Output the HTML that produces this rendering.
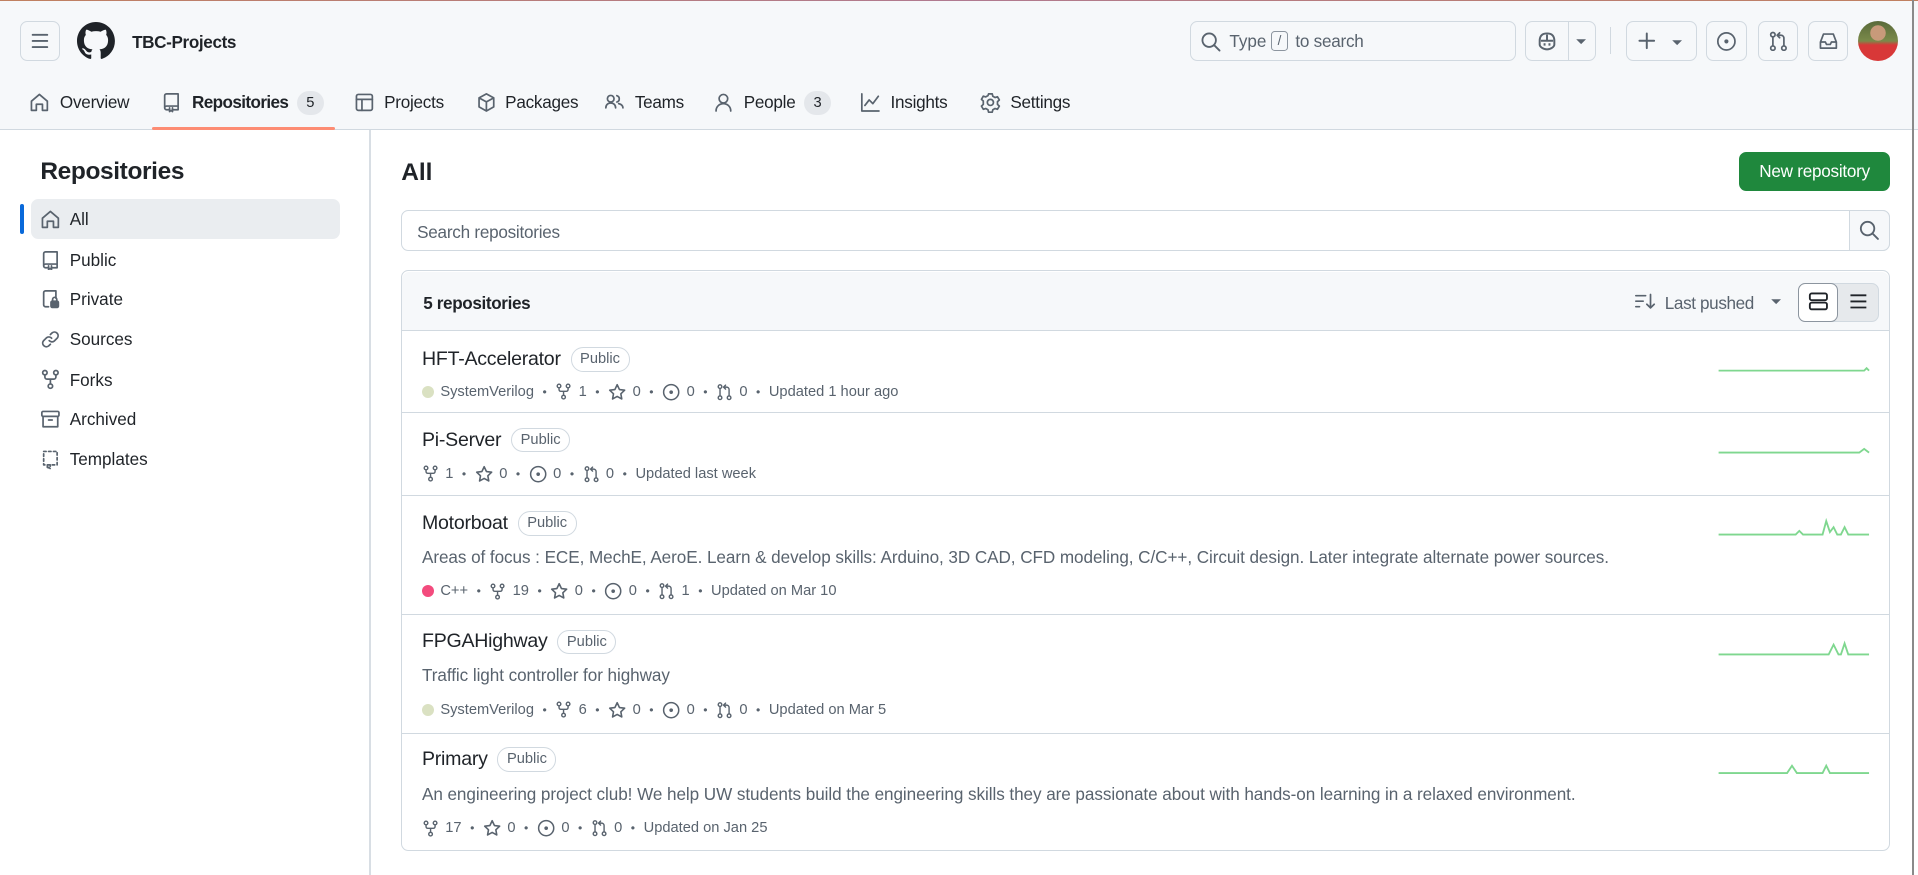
<!DOCTYPE html>
<html><head><meta charset="utf-8">
<style>
*{box-sizing:border-box;margin:0;padding:0}
html,body{width:1918px;height:875px;overflow:hidden;background:#fff}
#w{zoom:1.2232;width:1568px;height:716px;position:relative;font-family:"Liberation Sans",sans-serif;color:#1f2328;font-size:14px}
.a{position:absolute}
svg{display:block}
.ic{fill:none;stroke:#59636e;stroke-width:1.4;stroke-linecap:round;stroke-linejoin:round}
.btn{position:absolute;border:1px solid #d1d9e0;border-radius:6px;background:#f6f8fa}
.tab{position:absolute;top:75px;font-size:14px;color:#1f2328;white-space:nowrap;letter-spacing:-0.2px;display:flex;align-items:center;height:18px}
.cnt{height:20px;min-width:22px;border-radius:10px;background:#e4e7eb;font-size:12px;text-align:center;line-height:20px;color:#1f2328;margin-left:7px;letter-spacing:0}
.side{position:absolute;left:57px;font-size:14px;color:#1f2328}
.sic{position:absolute;left:33px}
.row{position:absolute;left:328px;width:1216px;border-top:1px solid #d1d9e0}
.th{position:absolute;left:17px;display:flex;align-items:center;gap:8px}
.t{font-size:16px;color:#1f2328;letter-spacing:-0.2px}
.pub{font-size:12px;color:#59636e;border:1px solid #d1d9e0;border-radius:10px;height:20px;line-height:18px;padding:0 7px}
.meta{position:absolute;left:17px;font-size:12px;color:#59636e;display:flex;align-items:center;white-space:nowrap}
.meta svg{margin-right:5px}
.dot{margin:0 7px;font-size:10px}
.desc{position:absolute;left:17px;font-size:14px;color:#59636e;letter-spacing:-0.05px}
.lang{width:10px;height:10px;border-radius:50%;display:inline-block;margin-right:5px}
</style></head><body><div id="w">
<div class="a" style="left:0;top:0;width:1568px;height:106px;background:#f6f8fa;border-bottom:1px solid #d1d9e0"></div>
<div class="a" style="left:0;top:0;width:1568px;height:1px;background:linear-gradient(90deg,#c08060,#b07a90,#c08060)"></div>
<div class="a" style="left:1563px;top:0;width:2px;height:716px;background:#8a8a8a"></div>
<div class="btn" style="left:16px;top:17px;width:33px;height:33px"><svg width="31" height="31" class="ic" style="stroke:#59636e;stroke-width:1.5"><path d="M9.5 10.5h12M9.5 15.5h12M9.5 20.5h12"/></svg></div>
<svg class="a" style="left:63px;top:18px" width="31" height="31" viewBox="0 0 16 16"><path fill="#1f2328" d="M8 0C3.58 0 0 3.58 0 8c0 3.540 2.29 6.53 5.47 7.59.4.07.55-.17.55-.38 0-.19-.01-.82-.01-1.49-2.01.37-2.53-.49-2.690-.94-.09-.23-.48-.94-.82-1.13-.28-.15-.68-.52-.01-.53.63-.01 1.08.58 1.23.82.72 1.21 1.870.87 2.330.66.07-.52.28-.87.51-1.07-1.78-.2-3.64-.89-3.64-3.95 0-.87.31-1.59.82-2.15-.08-.2-.36-1.02.08-2.12 0 0 .67-.21 2.2.82.64-.18 1.32-.27 2-.27.68 0 1.36.09 2 .27 1.53-1.04 2.2-.82 2.2-.82.44 1.1.16 1.92.08 2.12.51.56.82 1.27.82 2.15 0 3.07-1.87 3.75-3.65 3.95.29.25.54.73.54 1.48 0 1.07-.01 1.93-.01 2.2 0 .21.15.46.55.38A8.013 8.013 0 0016 8c0-4.42-3.58-8-8-8z"/></svg>
<div class="a" style="left:108px;top:27px;font-size:14px;font-weight:bold;letter-spacing:-0.3px">TBC-Projects</div>
<div class="btn" style="left:973px;top:17px;width:266px;height:33px;background:#f6f8fa"></div>
<svg class="a ic" style="left:981px;top:25px;stroke-width:1.5" width="18" height="18"><circle cx="7.5" cy="7.5" r="5.5"/><path d="M11.5 11.5l4.5 4.5"/></svg>
<div class="a" style="left:1005px;top:26px;font-size:14px;color:#59636e">Type</div>
<div class="a" style="left:1039px;top:25px;width:14px;height:17px;border:1px solid #8c959f;border-radius:3px;font-size:11px;color:#59636e;text-align:center;line-height:15px">/</div>
<div class="a" style="left:1059px;top:26px;font-size:14px;color:#59636e;letter-spacing:-0.2px">to search</div>
<div class="btn" style="left:1247px;top:17px;width:58px;height:33px"></div>
<div class="a" style="left:1282px;top:18px;width:1px;height:31px;background:#d1d9e0"></div>
<svg class="a" style="left:1256px;top:25px" width="18" height="17" viewBox="0 0 18 17"><path fill="none" stroke="#59636e" stroke-width="1.6" d="M3 8c0-4 2-6 6-6s6 2 6 6v3c0 2-3 4-6 4s-6-2-6-4z"/><path stroke="#59636e" stroke-width="1.6" d="M9 3v5M4 8h10"/><path stroke="#59636e" stroke-width="1.6" d="M7 10v2M11 10v2"/></svg>
<svg class="a" style="left:1288px;top:31px" width="10" height="6"><path d="M1 1h8L5 5z" fill="#59636e"/></svg>
<div class="a" style="left:1316px;top:22px;width:1px;height:22px;background:#d1d9e0"></div>
<div class="btn" style="left:1329px;top:17px;width:58px;height:33px"></div>
<svg class="a ic" style="left:1338px;top:25px;stroke-width:1.6" width="16" height="16"><path d="M8 2v12M2 8h12"/></svg>
<svg class="a" style="left:1366px;top:32px" width="10" height="6"><path d="M1 1h8L5 5z" fill="#59636e"/></svg>
<div class="btn" style="left:1395px;top:17px;width:33px;height:33px"></div>
<svg class="a ic" style="left:1403px;top:25px" width="17" height="17"><circle cx="8.5" cy="8.5" r="7"/><circle cx="8.5" cy="8.5" r="1" fill="#59636e"/></svg>
<div class="btn" style="left:1437px;top:17px;width:33px;height:33px"></div>
<svg class="a ic" style="left:1445px;top:25px" width="17" height="17"><circle cx="4" cy="3" r="1.8"/><circle cx="4" cy="14" r="1.8"/><circle cx="13" cy="14" r="1.8"/><path d="M4 5v7M13 12V6c0-1.5-1-2.5-2.5-2.5H8M9.5 1.5l-2 2 2 2"/></svg>
<div class="btn" style="left:1478px;top:17px;width:33px;height:33px"></div>
<svg class="a ic" style="left:1486px;top:25px" width="17" height="17"><path d="M2 9l2.5-6.5h8L15 9v5H2zM2 9h4l1 2h3l1-2h4"/></svg>
<div class="a" style="left:1519px;top:17px;width:33px;height:33px;border-radius:50%;overflow:hidden;background:radial-gradient(circle at 50% 30%,#c89a7a 0 22%,transparent 23%),linear-gradient(180deg,#5a6a3a 0%,#7a8a4a 50%,#d83838 60%,#d83838 100%)"></div>
<!-- tabs -->
<svg class="a ic" style="left:24px;top:75px" width="17" height="17"><path d="M2 7.5L8.5 2 15 7.5V15h-4v-5H6v5H2z"/></svg>
<div class="tab" style="left:49px">Overview</div>
<svg class="a ic" style="left:132px;top:75px" width="17" height="17"><path d="M3 13V3a1.5 1.5 0 011.5-1.5H14v10H4.5A1.5 1.5 0 003 13a1.5 1.5 0 001.5 1.5H6M14 11.5v3h-4M7 13v3l1.2-1 1.2 1v-3"/></svg>
<div class="tab" style="left:157px;font-weight:bold;letter-spacing:-0.5px">Repositories<span class="cnt" style="font-weight:normal">5</span></div>
<div class="a" style="left:124px;top:104px;width:150px;height:2px;background:#fd8c73;border-radius:2px"></div>
<svg class="a ic" style="left:289px;top:75px" width="17" height="17"><rect x="2" y="2" width="13" height="13" rx="1.5"/><path d="M2 6h13M6.5 6v9"/></svg>
<div class="tab" style="left:314px">Projects</div>
<svg class="a ic" style="left:389px;top:75px" width="17" height="17"><path d="M8.5 1.5l6 3.3v7.4l-6 3.3-6-3.3V4.8zM2.5 4.8l6 3.3 6-3.3M8.5 8.1v7.4"/></svg>
<div class="tab" style="left:413px">Packages</div>
<svg class="a ic" style="left:494px;top:75px" width="17" height="17"><circle cx="5.5" cy="5.5" r="2.7"/><path d="M1.5 13c0-2.5 1.8-4 4-4s4 1.5 4 4M10.5 3a2.7 2.7 0 010 5.2M12 9.5c2 .5 3.5 1.8 3.5 3.5"/></svg>
<div class="tab" style="left:519px">Teams</div>
<svg class="a ic" style="left:583px;top:75px" width="17" height="17"><circle cx="8.5" cy="5.5" r="3.5"/><path d="M2.5 15.5c0-3.5 2.7-6 6-6s6 2.5 6 6"/></svg>
<div class="tab" style="left:608px">People<span class="cnt">3</span></div>
<svg class="a ic" style="left:703px;top:75px" width="17" height="17"><path d="M1.5 1.5v14h14M4 11l3.5-4.5 3 3 4.5-6"/></svg>
<div class="tab" style="left:728px">Insights</div>
<svg class="a ic" style="left:801px;top:75px" width="17" height="17"><circle cx="8.5" cy="8.5" r="2.5"/><path d="M7 1.5h3l.5 2 1.8 1 2-.6 1.5 2.6-1.5 1.4v2.2l1.5 1.4-1.5 2.6-2-.6-1.8 1-.5 2H7l-.5-2-1.8-1-2 .6-1.5-2.6 1.5-1.4V7.4L1.2 6l1.5-2.6 2 .6 1.8-1z"/></svg>
<div class="tab" style="left:826px">Settings</div>
<!-- sidebar -->
<div class="a" style="left:302px;top:106px;width:1px;height:610px;background:#d8dee4"></div>
<div class="a" style="left:33px;top:129px;font-size:20px;font-weight:600;letter-spacing:-0.3px">Repositories</div>
<div class="a" style="left:25px;top:163px;width:253px;height:32px;border-radius:6px;background:#eaedf0"></div>
<div class="a" style="left:16px;top:167px;width:4px;height:24px;border-radius:2px;background:#0969da"></div>
<svg class="a ic sic" style="top:171px" width="17" height="17"><path d="M2 7.5L8.5 2 15 7.5V15h-4v-5H6v5H2z"/></svg>
<div class="side" style="top:172px">All</div>
<svg class="a ic sic" style="top:204px" width="17" height="17"><path d="M3 13V3a1.5 1.5 0 011.5-1.5H14v10H4.5A1.5 1.5 0 003 13a1.5 1.5 0 001.5 1.5H6M14 11.5v3h-4M7 13v3l1.2-1 1.2 1v-3"/></svg>
<div class="side" style="top:205px">Public</div>
<svg class="a ic sic" style="top:236px" width="17" height="17"><path d="M7 14.5H4.5A1.5 1.5 0 013 13V3a1.5 1.5 0 011.5-1.5H13v6"/><rect x="9" y="10" width="6" height="5" rx="1" fill="#59636e"/><path d="M10.3 10V8.5a1.7 1.7 0 013.4 0V10"/></svg>
<div class="side" style="top:237px">Private</div>
<svg class="a ic sic" style="top:269px" width="17" height="17"><path d="M7.5 9.5a3 3 0 004.2.3l2.5-2.5a3 3 0 00-4.2-4.2L8.5 4.5M9.5 7.5a3 3 0 00-4.2-.3L2.8 9.7a3 3 0 004.2 4.2l1.5-1.4"/></svg>
<div class="side" style="top:270px">Sources</div>
<svg class="a ic sic" style="top:302px" width="17" height="17"><circle cx="4" cy="3" r="1.8"/><circle cx="13" cy="3" r="1.8"/><circle cx="8.5" cy="14" r="1.8"/><path d="M4 5v1.5c0 1 .7 1.8 1.8 1.8h5.4c1 0 1.8-.8 1.8-1.8V5M8.5 8.3v3.9"/></svg>
<div class="side" style="top:303px">Forks</div>
<svg class="a ic sic" style="top:334px" width="17" height="17"><rect x="1.5" y="2" width="14" height="4" rx="1"/><path d="M2.5 6v8.5h12V6M7 9h3"/></svg>
<div class="side" style="top:335px">Archived</div>
<svg class="a ic sic" style="top:367px" width="17" height="17"><path stroke-dasharray="2 2" d="M3 2h11v11H3zM6 13v3l1.2-1 1.2 1v-3"/></svg>
<div class="side" style="top:368px">Templates</div>
<!-- main -->
<div class="a" style="left:328px;top:130px;font-size:20px;font-weight:600">All</div>
<div class="a" style="left:1422px;top:124px;width:123px;height:32px;border-radius:6px;background:#1f883d;color:#fff;font-size:14px;text-align:center;line-height:33px;letter-spacing:-0.2px">New repository</div>
<div class="a" style="left:328px;top:172px;width:1217px;height:33px;border:1px solid #d1d9e0;border-radius:6px"></div>
<div class="a" style="left:341px;top:182px;font-size:14px;color:#59636e;letter-spacing:-0.2px">Search repositories</div>
<div class="a" style="left:1512px;top:172px;width:33px;height:33px;border:1px solid #d1d9e0;border-radius:0 6px 6px 0;background:#f6f8fa"></div>
<svg class="a ic" style="left:1520px;top:180px;stroke-width:1.5" width="17" height="17"><circle cx="7" cy="7" r="5.5"/><path d="M11 11l4.5 4.5"/></svg>
<div class="a" style="left:328px;top:221px;width:1217px;height:475px;border:1px solid #d1d9e0;border-radius:6px"></div>
<div class="a" style="left:329px;top:222px;width:1215px;height:48px;background:#f6f8fa;border-radius:6px 6px 0 0"></div>
<div class="a" style="left:346px;top:240px;font-size:14px;font-weight:bold;letter-spacing:-0.3px">5 repositories</div>
<svg class="a ic" style="left:1336px;top:239px" width="18" height="16"><path d="M1.5 3h8M1.5 7.5h6M1.5 12h3M13.5 2v11M10.5 10l3 3 3-3"/></svg>
<div class="a" style="left:1361px;top:240px;font-size:14px;color:#59636e;letter-spacing:-0.3px">Last pushed</div>
<svg class="a" style="left:1447px;top:244px" width="10" height="6"><path d="M1 1h8L5 5z" fill="#59636e"/></svg>
<div class="a" style="left:1470px;top:231px;width:66px;height:32px;border:1px solid #d1d9e0;border-radius:6px;background:#e6e9ec"></div>
<div class="a" style="left:1470px;top:231px;width:33px;height:32px;border:1px solid #8c959f;border-radius:6px;background:#fff"></div>
<svg class="a" style="left:1478px;top:238px" width="17" height="17" fill="none" stroke="#1f2328" stroke-width="1.5"><rect x="1.5" y="2" width="14" height="5.5" rx="1.5"/><rect x="1.5" y="9.5" width="14" height="5.5" rx="1.5"/></svg>
<svg class="a" style="left:1511px;top:238px" width="17" height="17" fill="none" stroke="#1f2328" stroke-width="1.5"><path d="M2 3.5h13M2 8.5h13M2 13.5h13"/></svg>

<div class="row" style="top:270px;height:67px">
 <div class="th" style="top:13px"><span class="t">HFT-Accelerator</span><span class="pub">Public</span></div>
 <div class="meta" style="top:42px"><span class="lang" style="background:#dae1c2"></span>SystemVerilog<span class="dot">•</span>
  <svg class="ic" width="14" height="14" viewBox="0 0 17 17"><circle cx="4" cy="3" r="1.8"/><circle cx="13" cy="3" r="1.8"/><circle cx="8.5" cy="14" r="1.8"/><path d="M4 5v1.5c0 1 .7 1.8 1.8 1.8h5.4c1 0 1.8-.8 1.8-1.8V5M8.5 8.3v3.9"/></svg>1<span class="dot">•</span>
  <svg class="ic" width="15" height="15" viewBox="0 0 16 16"><path d="M8 1.5l2 4.2 4.5.6-3.3 3.1.8 4.5L8 11.7l-4 2.2.8-4.5L1.5 6.3 6 5.7z"/></svg>0<span class="dot">•</span>
  <svg class="ic" width="15" height="15" viewBox="0 0 17 17"><circle cx="8.5" cy="8.5" r="7"/><circle cx="8.5" cy="8.5" r="1" fill="#59636e"/></svg>0<span class="dot">•</span>
  <svg class="ic" width="14" height="15" viewBox="0 0 17 17"><circle cx="4" cy="3" r="1.8"/><circle cx="4" cy="14" r="1.8"/><circle cx="13" cy="14" r="1.8"/><path d="M4 5v7M13 12V6c0-1.5-1-2.5-2.5-2.5H8M9.5 1.5l-2 2 2 2"/></svg>0<span class="dot">•</span>Updated 1 hour ago</div>
</div>
<div class="row" style="top:337px;height:68px">
 <div class="th" style="top:12px"><span class="t">Pi-Server</span><span class="pub">Public</span></div>
 <div class="meta" style="top:42px">
  <svg class="ic" width="14" height="14" viewBox="0 0 17 17"><circle cx="4" cy="3" r="1.8"/><circle cx="13" cy="3" r="1.8"/><circle cx="8.5" cy="14" r="1.8"/><path d="M4 5v1.5c0 1 .7 1.8 1.8 1.8h5.4c1 0 1.8-.8 1.8-1.8V5M8.5 8.3v3.9"/></svg>1<span class="dot">•</span>
  <svg class="ic" width="15" height="15" viewBox="0 0 16 16"><path d="M8 1.5l2 4.2 4.5.6-3.3 3.1.8 4.5L8 11.7l-4 2.2.8-4.5L1.5 6.3 6 5.7z"/></svg>0<span class="dot">•</span>
  <svg class="ic" width="15" height="15" viewBox="0 0 17 17"><circle cx="8.5" cy="8.5" r="7"/><circle cx="8.5" cy="8.5" r="1" fill="#59636e"/></svg>0<span class="dot">•</span>
  <svg class="ic" width="14" height="15" viewBox="0 0 17 17"><circle cx="4" cy="3" r="1.8"/><circle cx="4" cy="14" r="1.8"/><circle cx="13" cy="14" r="1.8"/><path d="M4 5v7M13 12V6c0-1.5-1-2.5-2.5-2.5H8M9.5 1.5l-2 2 2 2"/></svg>0<span class="dot">•</span>Updated last week</div>
</div>
<div class="row" style="top:405px;height:97px">
 <div class="th" style="top:12px"><span class="t">Motorboat</span><span class="pub">Public</span></div>
 <div class="desc" style="top:42px">Areas of focus : ECE, MechE, AeroE. Learn &amp; develop skills: Arduino, 3D CAD, CFD modeling, C/C++, Circuit design. Later integrate alternate power sources.</div>
 <div class="meta" style="top:70px"><span class="lang" style="background:#f34b7d"></span>C++<span class="dot">•</span>
  <svg class="ic" width="14" height="14" viewBox="0 0 17 17"><circle cx="4" cy="3" r="1.8"/><circle cx="13" cy="3" r="1.8"/><circle cx="8.5" cy="14" r="1.8"/><path d="M4 5v1.5c0 1 .7 1.8 1.8 1.8h5.4c1 0 1.8-.8 1.8-1.8V5M8.5 8.3v3.9"/></svg>19<span class="dot">•</span>
  <svg class="ic" width="15" height="15" viewBox="0 0 16 16"><path d="M8 1.5l2 4.2 4.5.6-3.3 3.1.8 4.5L8 11.7l-4 2.2.8-4.5L1.5 6.3 6 5.7z"/></svg>0<span class="dot">•</span>
  <svg class="ic" width="15" height="15" viewBox="0 0 17 17"><circle cx="8.5" cy="8.5" r="7"/><circle cx="8.5" cy="8.5" r="1" fill="#59636e"/></svg>0<span class="dot">•</span>
  <svg class="ic" width="14" height="15" viewBox="0 0 17 17"><circle cx="4" cy="3" r="1.8"/><circle cx="4" cy="14" r="1.8"/><circle cx="13" cy="14" r="1.8"/><path d="M4 5v7M13 12V6c0-1.5-1-2.5-2.5-2.5H8M9.5 1.5l-2 2 2 2"/></svg>1<span class="dot">•</span>Updated on Mar 10</div>
</div>
<div class="row" style="top:502px;height:97px">
 <div class="th" style="top:12px"><span class="t">FPGAHighway</span><span class="pub">Public</span></div>
 <div class="desc" style="top:42px">Traffic light controller for highway</div>
 <div class="meta" style="top:70px"><span class="lang" style="background:#dae1c2"></span>SystemVerilog<span class="dot">•</span>
  <svg class="ic" width="14" height="14" viewBox="0 0 17 17"><circle cx="4" cy="3" r="1.8"/><circle cx="13" cy="3" r="1.8"/><circle cx="8.5" cy="14" r="1.8"/><path d="M4 5v1.5c0 1 .7 1.8 1.8 1.8h5.4c1 0 1.8-.8 1.8-1.8V5M8.5 8.3v3.9"/></svg>6<span class="dot">•</span>
  <svg class="ic" width="15" height="15" viewBox="0 0 16 16"><path d="M8 1.5l2 4.2 4.5.6-3.3 3.1.8 4.5L8 11.7l-4 2.2.8-4.5L1.5 6.3 6 5.7z"/></svg>0<span class="dot">•</span>
  <svg class="ic" width="15" height="15" viewBox="0 0 17 17"><circle cx="8.5" cy="8.5" r="7"/><circle cx="8.5" cy="8.5" r="1" fill="#59636e"/></svg>0<span class="dot">•</span>
  <svg class="ic" width="14" height="15" viewBox="0 0 17 17"><circle cx="4" cy="3" r="1.8"/><circle cx="4" cy="14" r="1.8"/><circle cx="13" cy="14" r="1.8"/><path d="M4 5v7M13 12V6c0-1.5-1-2.5-2.5-2.5H8M9.5 1.5l-2 2 2 2"/></svg>0<span class="dot">•</span>Updated on Mar 5</div>
</div>
<div class="row" style="top:599px;height:97px">
 <div class="th" style="top:11px"><span class="t">Primary</span><span class="pub">Public</span></div>
 <div class="desc" style="top:42px">An engineering project club! We help UW students build the engineering skills they are passionate about with hands-on learning in a relaxed environment.</div>
 <div class="meta" style="top:70px">
  <svg class="ic" width="14" height="14" viewBox="0 0 17 17"><circle cx="4" cy="3" r="1.8"/><circle cx="13" cy="3" r="1.8"/><circle cx="8.5" cy="14" r="1.8"/><path d="M4 5v1.5c0 1 .7 1.8 1.8 1.8h5.4c1 0 1.8-.8 1.8-1.8V5M8.5 8.3v3.9"/></svg>17<span class="dot">•</span>
  <svg class="ic" width="15" height="15" viewBox="0 0 16 16"><path d="M8 1.5l2 4.2 4.5.6-3.3 3.1.8 4.5L8 11.7l-4 2.2.8-4.5L1.5 6.3 6 5.7z"/></svg>0<span class="dot">•</span>
  <svg class="ic" width="15" height="15" viewBox="0 0 17 17"><circle cx="8.5" cy="8.5" r="7"/><circle cx="8.5" cy="8.5" r="1" fill="#59636e"/></svg>0<span class="dot">•</span>
  <svg class="ic" width="14" height="15" viewBox="0 0 17 17"><circle cx="4" cy="3" r="1.8"/><circle cx="4" cy="14" r="1.8"/><circle cx="13" cy="14" r="1.8"/><path d="M4 5v7M13 12V6c0-1.5-1-2.5-2.5-2.5H8M9.5 1.5l-2 2 2 2"/></svg>0<span class="dot">•</span>Updated on Jan 25</div>
</div>
<svg class="a" style="left:0;top:0" width="1568" height="716" fill="none" stroke="#7fd78f" stroke-width="1.5">
<polyline points="1405,303 1524,303 1526,301 1528,303"/>
<polyline points="1405,370 1520,370 1524,367 1528,370"/>
<polyline points="1405,437 1468,437 1471,434 1474,437 1490,437 1493,426 1496,435 1499,431 1502,437 1505,437 1508,431 1511,437 1528,437"/>
<polyline points="1405,535 1495,535 1499,527 1503,535 1505,535 1508,526 1511,535 1528,535"/>
<polyline points="1405,632 1461,632 1465,626 1469,632 1490,632 1493,626 1496,632 1528,632"/>
</svg>
</div></body></html>
